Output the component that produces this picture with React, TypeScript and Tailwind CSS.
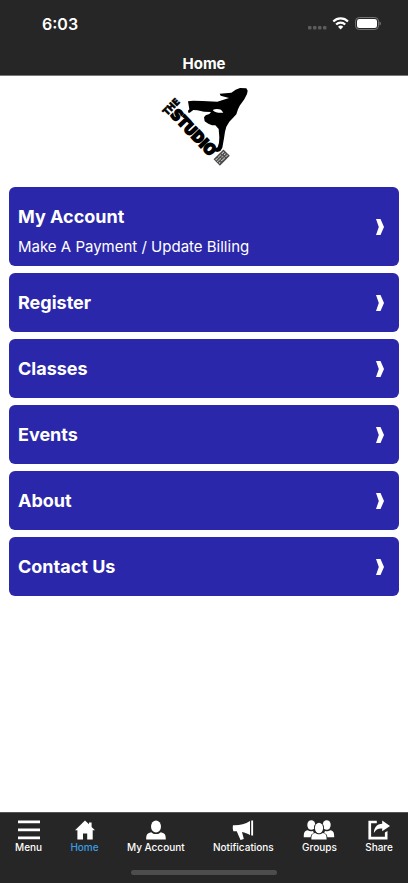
import React from 'react';
import { clsx } from 'clsx';

interface MenuItem {
  title: string;
  subtitle?: string;
}

interface TabItem {
  label: string;
  icon: React.ReactNode;
  active?: boolean;
}

const menuItems: MenuItem[] = [
  { title: 'My Account', subtitle: 'Make A Payment / Update Billing' },
  { title: 'Register' },
  { title: 'Classes' },
  { title: 'Events' },
  { title: 'About' },
  { title: 'Contact Us' },
];

const MenuIcon = () => (
  <svg viewBox="0 0 22 20" className="h-5 w-[22px]" fill="currentColor" aria-hidden="true">
    <path d="M0 .5h22v2.700H0zM0 8.500h22v2.700H0zM0 16.500h22v2.700H0z" />
  </svg>
);

const HomeIcon = () => (
  <svg viewBox="0 0 20 20" className="h-5 w-5" fill="currentColor" aria-hidden="true">
    <path d="M10 .4 14 4.300V2.500h2.600v4.400L20 10.300h-2.300V19.500h-5.500v-6H8v6H2.400v-9.200H0z" />
  </svg>
);

const PersonIcon = () => (
  <svg viewBox="0 0 20 20" className="h-5 w-5" fill="currentColor" aria-hidden="true">
    <ellipse cx="10" cy="6.500" rx="5" ry="6.100" />
    <path d="M.2 19.500c0-4.500.6-6.300 5-7.300 1.200 1.300 2.900 1.900 4.800 1.900s3.600-.6 4.800-1.900c4.400 1 5 2.800 5 7.300z" />
  </svg>
);

const MegaphoneIcon = () => (
  <svg viewBox="0 0 22 20" className="h-5 w-[22px]" fill="currentColor" aria-hidden="true">
    <path d="M19.200.5h1.900v15h-1.900zM1 5.300c6.200.3 12-1.200 17-4.300v14c-2.500-1.500-5.200-2.500-8-3l1.800 7-3.300 1L4.700 11.300H1.400C.7 9.300.6 7.300 1 5.300z" />
  </svg>
);

const GroupIcon = () => (
  <svg viewBox="0 0 32 20" className="h-5 w-8" fill="currentColor" aria-hidden="true">
    <ellipse cx="8.300" cy="5" rx="4" ry="4.800" />
    <ellipse cx="23.700" cy="5" rx="4" ry="4.800" />
    <path d="M.8 17.300c0-4.800.6-6.300 3.900-7 1.800 1.200 3.600 1.300 5.300.6l.8 2.200c-2.100.7-3 2-3.200 4.200zM31.200 17.300c0-4.800-.6-6.300-3.900-7-1.800 1.200-3.600 1.300-5.300.6l-.8 2.200c2.100.7 3 2 3.200 4.200z" />
    <ellipse cx="16" cy="8" rx="5" ry="6.200" fill="#262626" />
    <ellipse cx="16" cy="8" rx="4.100" ry="5.300" />
    <path d="M8.400 19.600c0-4.200.5-5.800 3.800-6.600 2.200 1.800 5.400 1.800 7.600 0 3.300.8 3.800 2.400 3.800 6.600z" />
  </svg>
);

const ShareIcon = () => (
  <svg viewBox="0 0 22 20" className="h-5 w-[22px]" fill="currentColor" aria-hidden="true">
    <path d="M.4.7h8.400v2.500H3.100v13.600h13.800v-4.200l2.600-1.700v8.600H.4z" />
    <path d="M14.200.6 22 6l-7.800 5.300V8.600c-4-.3-6.400.8-8.300 4.400.1-5.600 2.900-9 8.300-9.300z" />
  </svg>
);

const tabs: TabItem[] = [
  { label: 'Menu', icon: <MenuIcon /> },
  { label: 'Home', icon: <HomeIcon />, active: true },
  { label: 'My Account', icon: <PersonIcon /> },
  { label: 'Notifications', icon: <MegaphoneIcon /> },
  { label: 'Groups', icon: <GroupIcon /> },
  { label: 'Share', icon: <ShareIcon /> },
];

const StatusIcons = () => (
  <svg viewBox="0 0 74 16" className="h-4 w-[74px]" aria-hidden="true">
    <g fill="#5c5c5c">
      <rect x="1" y="10" width="3.500" height="3.500" rx="1" />
      <rect x="6" y="10" width="3.500" height="3.500" rx="1" />
      <rect x="11" y="10" width="3.500" height="3.500" rx="1" />
      <rect x="16" y="10" width="3.500" height="3.500" rx="1" />
    </g>
    <g fill="none" stroke="#fff" strokeWidth="2.200">
      <path d="M26.300 5.500a10.400 10.400 0 0 1 14.700 0" />
      <path d="M29.100 8.600a6.400 6.400 0 0 1 9.100 0" />
    </g>
    <path d="M31 10.800a3.700 3.700 0 0 1 5.300 0l-2.650 2.700z" fill="#fff" />
    <rect x="48.500" y="1.500" width="23" height="12" rx="3.700" fill="none" stroke="#737373" />
    <rect x="50" y="3" width="20" height="9" rx="2.300" fill="#fff" />
    <path d="M72.500 5.500c1.900.5 1.900 3.600 0 4.100z" fill="#737373" />
  </svg>
);

const StudioLogo = () => (
  <svg viewBox="0 0 300 276" className="h-[92px] w-[100px]" role="img" aria-label="The Studio">
    {/* dancer */}
    <path d="M102 64 118 62 145 63 190 65 225 54 200 47 197 41 232 38 245 29 258 24 277 25 281 32 279 42 271 58 257 77 252 88 247 103 236 115 226 125 217 140 213 155 210 175 205 203 199 213 190 216 176 212 179 207 191 202 195 188 196 172 194 147 184 136 174 136 163 131 152 124 150 112 155 106 166 102 171 96 150 95 130 91 118 90 107 98 103 98 102 92 106 88z" />
    <path d="M176 90c8-4 18-3 25-1l7 9c-12 1-24 1-32-8z" fill="#fff" />
    {/* lettering */}
    <g fontFamily="'Liberation Sans Narrow', 'DejaVu Sans Condensed', sans-serif" fontWeight="700" stroke="#000">
      <text transform="translate(39 108) rotate(-46)" fontSize="29" strokeWidth="2">
        THE
      </text>
      <text transform="translate(47 106) rotate(46)" fontSize="45" strokeWidth="5">
        STUDIO
      </text>
    </g>
    {/* stamp */}
    <g transform="translate(202 233) rotate(-45)">
      <rect x="-20" y="-13" width="42" height="27" fill="#4a4a4a" />
      <path d="M-17-7h8m3 0h12m3 0h9M-17 0h14m4 0h7m4 0h6M-17 7h6m4 0h15m3 0h8" stroke="#ddd" strokeWidth="3" strokeDasharray="4 1" />
    </g>
  </svg>
);

const Chevron = () => (
  <svg viewBox="0 0 8 16" className="h-4 w-2 shrink-0" fill="currentColor" aria-hidden="true">
    <path d="M0 0h4.500L8 8l-3.500 8H0l2.800-8z" />
  </svg>
);

export default function App() {
  return (
    <div className="flex min-h-screen flex-col bg-white font-['Inter','Liberation_Sans',sans-serif]">
      <header className="border-b border-[#777] bg-[#262626] text-white">
        <div className="flex h-[47px] items-center justify-between pr-[27px] pl-[42px]">
          <span className="text-base font-semibold">6:03</span>
          <StatusIcons />
        </div>
        <h1 className="pt-[7px] pb-px text-center text-[15px] leading-5 font-bold">Home</h1>
      </header>

      <main className="flex-1 px-[9px] pt-1">
        <div className="flex justify-center pb-[15px]">
          <StudioLogo />
        </div>
        <nav className="flex flex-col gap-[7px]" aria-label="Sections">
          {menuItems.map((item) => (
            <button
              key={item.title}
              className="flex w-full items-center justify-between rounded-md bg-[#2b27aa] py-[9px] pr-[15px] pl-[9px] text-left text-white"
            >
              <span className={clsx('flex flex-col', item.subtitle ? 'pt-2' : 'py-2')}>
                <span className="text-lg leading-[25px] font-bold">{item.title}</span>
                {item.subtitle && <span className="pt-2 text-[15px] leading-5">{item.subtitle}</span>}
              </span>
              <Chevron />
            </button>
          ))}
        </nav>
      </main>

      <footer className="border-t border-[#555] bg-[#262626] pt-[7px] pb-2">
        <nav className="flex justify-between px-[15px]" aria-label="Tabs">
          {tabs.map((tab) => (
            <button key={tab.label} className="flex flex-col items-center text-white">
              {tab.icon}
              <span className={clsx('text-[10px] leading-[14px] font-medium', tab.active && 'text-[#3b9be0]')}>
                {tab.label}
              </span>
            </button>
          ))}
        </nav>
        <div className="mx-auto mt-4 h-[5px] w-[146px] rounded-full bg-[#4d4d4d]" />
      </footer>
    </div>
  );
}
